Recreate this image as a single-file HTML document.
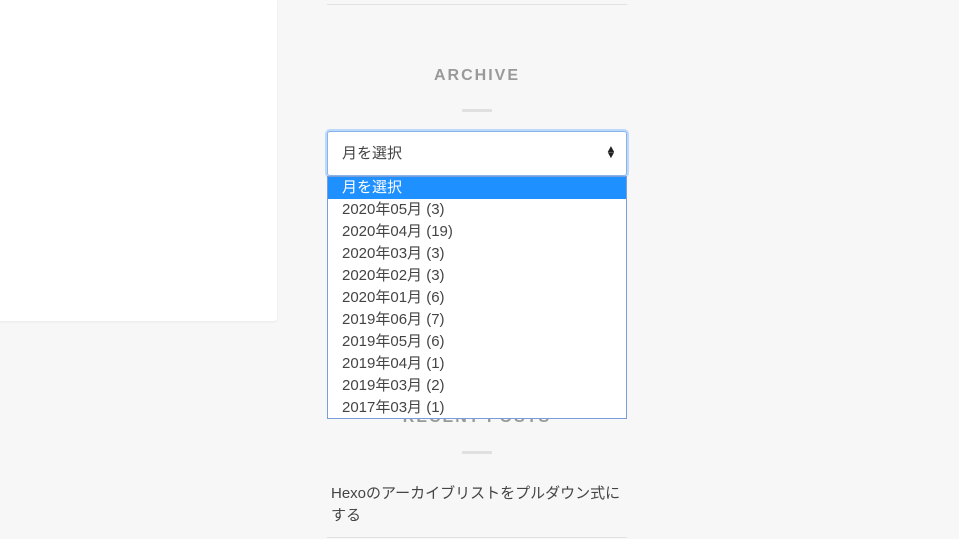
<!DOCTYPE html>
<html><head><meta charset="utf-8"><style>
body{margin:0;width:959px;height:539px;background:#f7f7f7;position:relative;overflow:hidden;font-family:"Liberation Sans","Noto Sans CJK JP",sans-serif}
.card{position:absolute;left:0;top:0;width:277px;height:321px;background:#fff;border-radius:0 0 3px 0;box-shadow:0 1px 2px rgba(0,0,0,.06)}
.line{position:absolute;left:327px;width:300px;height:1px;background:#e2e2e2}
h3{position:absolute;left:327px;width:300px;text-align:center;margin:0;font-size:16px;letter-spacing:2px;color:#999;font-weight:bold}
.bar{position:absolute;left:462px;width:30px;height:3px;background:#e0e0e0}
.sel{position:absolute;left:327px;top:131px;width:300px;height:45px;background:#fff;border:1px solid #8ab4e8;border-radius:3px;box-shadow:0 0 0 2px #bcd8fb;font-size:15px;color:#444;line-height:43px;padding-left:14px;box-sizing:border-box}
.arr{position:absolute;right:10px;top:15px;font-size:10px;line-height:6px;color:#222;transform:scaleX(1.1)}
.list{position:absolute;left:327px;top:176px;width:298px;height:241px;background:#fff;border:1px solid #7a9fd8;box-sizing:content-box}
.list div{height:22px;line-height:22px;padding-left:14px;font-size:15px;color:#444}
.list div.a{background:#1e90ff;color:#fff}
.post{position:absolute;left:331px;top:483px;width:296px;font-size:15px;line-height:22px;color:#444}
</style></head><body>
<div class="card"></div>
<div class="line" style="top:4px"></div>
<h3 style="top:67px">ARCHIVE</h3>
<div class="bar" style="top:109px"></div>
<h3 style="top:409px">RECENT POSTS</h3>
<div class="bar" style="top:451px"></div>
<div class="post">Hexoのアーカイブリストをプルダウン式にする</div>
<div class="line" style="top:537px"></div>
<div class="sel">月を選択<div class="arr">▲<br>▼</div></div>
<div class="list">
<div class="a">月を選択</div>
<div>2020年05月 (3)</div><div>2020年04月 (19)</div><div>2020年03月 (3)</div><div>2020年02月 (3)</div><div>2020年01月 (6)</div><div>2019年06月 (7)</div><div>2019年05月 (6)</div><div>2019年04月 (1)</div><div>2019年03月 (2)</div><div>2017年03月 (1)</div>
</div>
</body></html>
